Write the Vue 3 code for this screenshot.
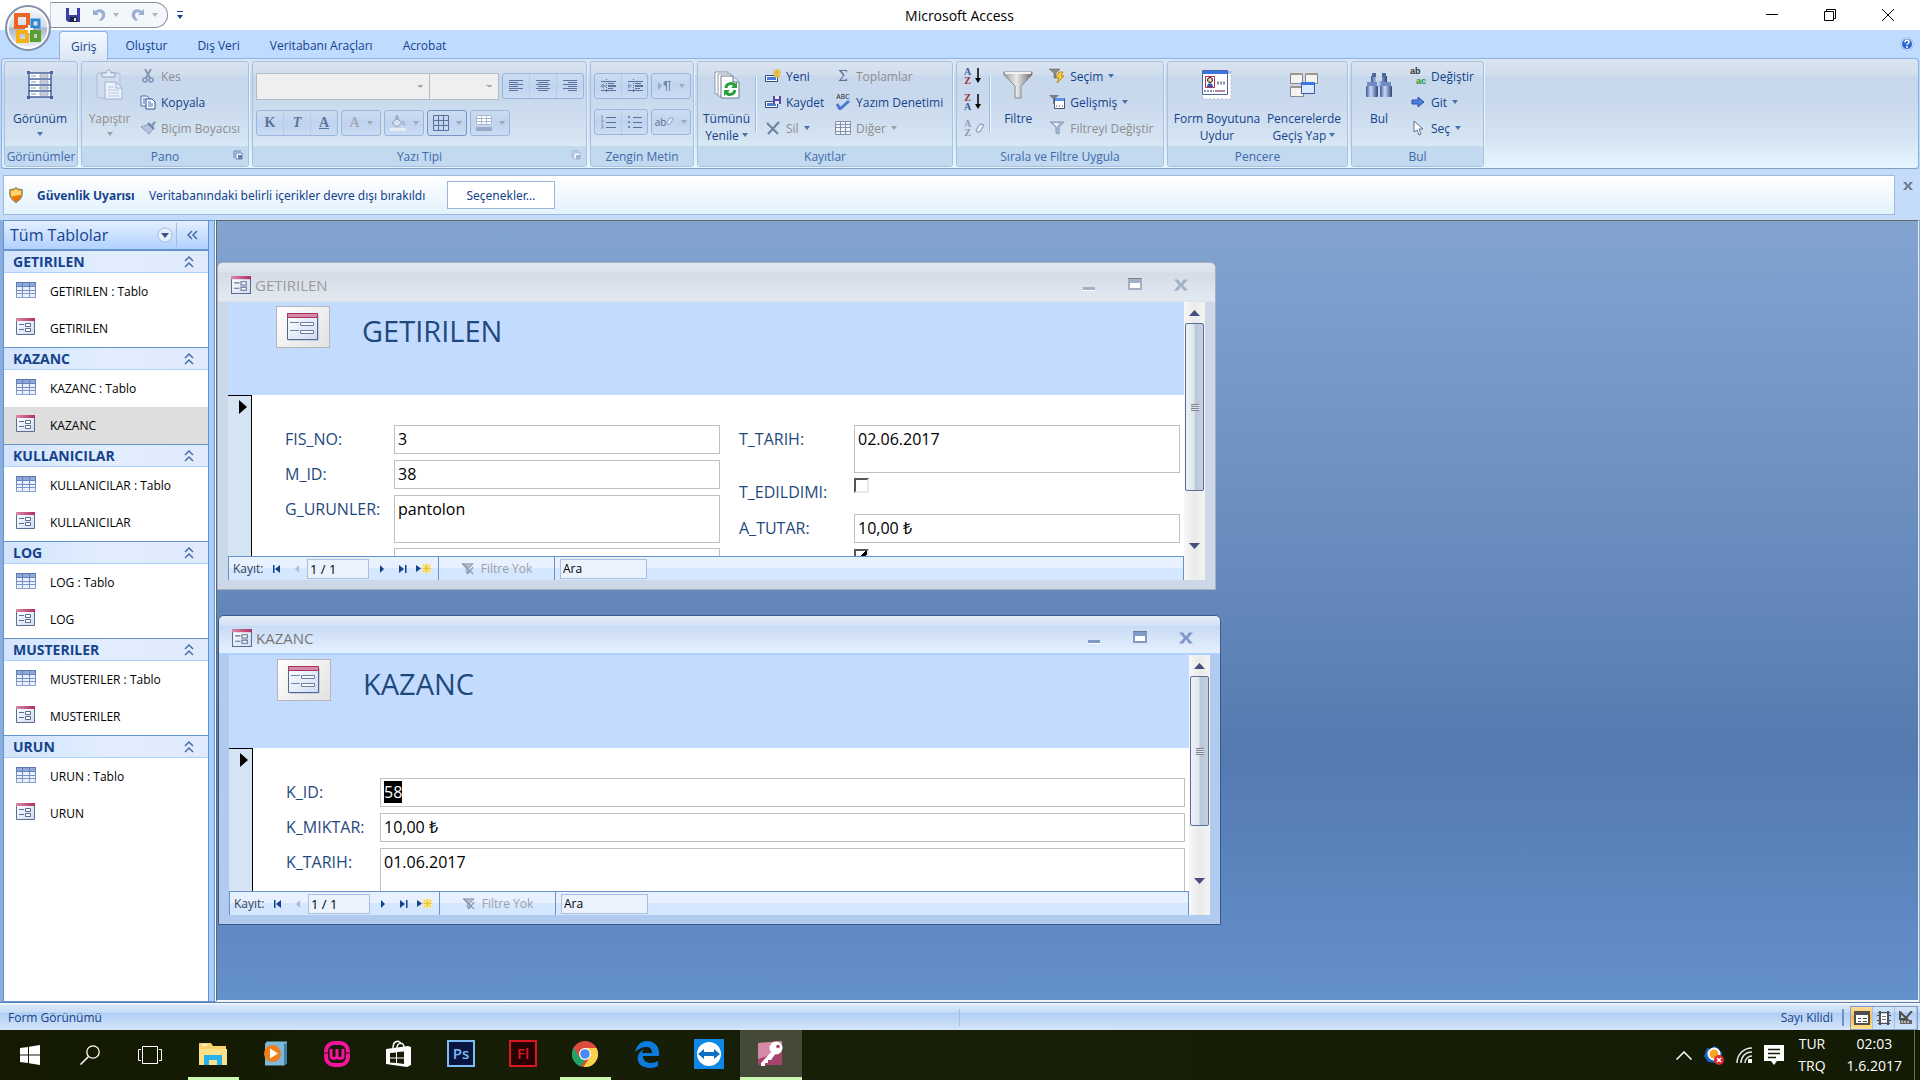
<template>
  <div class="app">
    <!-- ikonlar -->
    <svg class="sprite" aria-hidden="true">
      <defs>
        <linearGradient id="g-orb" x1="0" y1="0" x2="0" y2="1">
          <stop offset="0" stop-color="#fdfdfe" /><stop offset=".48" stop-color="#d3dae6" />
          <stop offset=".5" stop-color="#aab6ca" /><stop offset="1" stop-color="#f4f8fc" />
        </linearGradient>
        <linearGradient id="g-pink" x1="0" y1="0" x2="1" y2="0">
          <stop offset="0" stop-color="#d98bab" /><stop offset="1" stop-color="#b03060" />
        </linearGradient>
        <linearGradient id="g-paper" x1="0" y1="0" x2="1" y2="1">
          <stop offset="0" stop-color="#fff" /><stop offset="1" stop-color="#cfdcf2" />
        </linearGradient>
        <linearGradient id="g-metal" x1="0" y1="0" x2="1" y2="0">
          <stop offset="0" stop-color="#a0a0a0" /><stop offset=".45" stop-color="#e8e8e8" /><stop offset="1" stop-color="#6f6f6f" />
        </linearGradient>
        <linearGradient id="g-binoc" x1="0" y1="0" x2="1" y2="0">
          <stop offset="0" stop-color="#3c5794" /><stop offset=".4" stop-color="#c9dafa" /><stop offset="1" stop-color="#2f4579" />
        </linearGradient>
        <linearGradient id="g-table" x1="0" y1="0" x2="0" y2="1">
          <stop offset="0" stop-color="#5877b4" /><stop offset="1" stop-color="#8ba3cf" />
        </linearGradient>
      </defs>
      <symbol id="i-office" viewBox="0 0 48 48">
        <circle cx="24" cy="24" r="22" fill="url(#g-orb)" stroke="#8391ab" stroke-width="2" />
        <circle cx="24" cy="24" r="20" fill="none" stroke="#fff" stroke-width="1.5" />
        <path d="M12 11h12v12H12z" fill="none" stroke="#ea6424" stroke-width="4" />
        <path d="M28 16h7v7h-7z" fill="none" stroke="#2d8ad2" stroke-width="3" />
        <path d="M14 28h9v9h-9z" fill="none" stroke="#f5b01c" stroke-width="4" />
        <path d="M28 28h7v8h-7z" fill="none" stroke="#58a031" stroke-width="4" />
        <path d="M25 21v8M21 25h8" stroke="#fff" stroke-width="2" />
      </symbol>
      <symbol id="i-save" viewBox="0 0 14 14">
        <path d="M0 0h14v14H2l-2-2z" fill="#3a41a6" /><path d="M3 0h8v7H3z" fill="#eef2fb" />
        <path d="M4 9h7v5H4z" fill="#20223f" /><path d="M8 10h2v3H8z" fill="#dfe5f5" />
      </symbol>
      <symbol id="i-undo" viewBox="0 0 14 14">
        <path d="M1 1v6h6L5 5c3-2 5 0 5 2s-1 3-3 5l2 1c3-2 5-4 4-8C12 1 7 0 3 3z" fill="#9aafd0" />
      </symbol>
      <symbol id="i-arrow" viewBox="0 0 6 4"><path d="M0 0h6L3 4z" fill="currentColor" /></symbol>
      <symbol id="i-view" viewBox="0 0 26 28">
        <g fill="none" stroke="#47639f" stroke-width="1.5">
          <path d="M2 2h22v24H2zM2 8h22M2 14h22M2 20h22" fill="#fff" />
          <path d="M13 4h8v2h-8zM13 10h8v2h-8zM13 16h8v2h-8zM13 22h8v2h-8z" stroke="#8a96ad" stroke-width="1" />
          <path d="M4 5h5M4 11h5M4 17h5M4 23h5" stroke="#8a96ad" stroke-width="1" />
        </g>
        <path d="M0 0h3v3H0zM23 0h3v3h-3zM0 25h3v3H0zM23 25h3v3h-3z" fill="#47639f" />
      </symbol>
      <symbol id="i-paste" viewBox="0 0 27 30">
        <rect x="1" y="3" width="23" height="25" rx="2" fill="#d0dcef" stroke="#aebdd6" />
        <path d="M6 3h4c0-4 5-4 5 0h4v4H6z" fill="#e5ecf6" stroke="#92a3c0" />
        <path d="M9 12h11l6 6v11H9z" fill="#eaf1fb" stroke="#9fb2d1" />
        <path d="M20 12v6h6" fill="none" stroke="#9fb2d1" /><path d="M12 17h6M12 20h11M12 23h11M12 26h11" stroke="#b7c8e2" />
      </symbol>
      <symbol id="i-cut" viewBox="0 0 16 16">
        <path d="M5 1l5 9M11 1L6 10" stroke="#8796b1" stroke-width="2" />
        <circle cx="5" cy="12" r="2" fill="none" stroke="#7f92b5" stroke-width="1.5" /><circle cx="11" cy="12" r="2" fill="none" stroke="#7f92b5" stroke-width="1.5" />
      </symbol>
      <symbol id="i-copy" viewBox="0 0 16 16">
        <path d="M1 2h6l2 2v8H1z" fill="#eef4ff" stroke="#4a6cb0" /><path d="M6 5h6l3 3v7H6z" fill="#fff" stroke="#2d4f99" />
        <path d="M3 5h3M3 7h2M3 9h2M8 8h3M8 10h5M8 12h5" stroke="#4a6cb0" />
      </symbol>
      <symbol id="i-brush" viewBox="0 0 16 16">
        <path d="M11 5l3-4 2 1-3 5z" fill="#8c9cb8" /><path d="M1 7l9-3 4 4-5 6-3-3z" fill="#b4c3de" stroke="#8d9fc0" />
        <path d="M8 3l6 6" stroke="#6f83aa" stroke-width="2" />
      </symbol>
      <symbol id="i-launch" viewBox="0 0 10 10">
        <path d="M1 8V1h7" fill="none" stroke="currentColor" /><path d="M3 3h6v6H3z" fill="#fff" stroke="currentColor" /><path d="M5 5h4v4H5z" fill="currentColor" />
      </symbol>
      <symbol id="i-left" viewBox="0 0 16 14"><path d="M1 1.500h14M1 3.500h9M1 5.500h14M1 7.500h9M1 9.500h14M1 11.500h9" stroke="#5d7299" /></symbol>
      <symbol id="i-center" viewBox="0 0 16 14"><path d="M1 1.500h14M3 3.500h10M1 5.500h14M3 7.500h10M1 9.500h14M3 11.500h10" stroke="#5d7299" /></symbol>
      <symbol id="i-right" viewBox="0 0 16 14"><path d="M1 1.500h14M6 3.500h9M1 5.500h14M6 7.500h9M1 9.500h14M6 11.500h9" stroke="#5d7299" /></symbol>
      <symbol id="i-outdent" viewBox="0 0 16 14">
        <path d="M1 2.500h15M8 4.500h6M8 9.500h5M1 11.500h15" stroke="#5d7299" /><path d="M8 7h8" stroke="#5d7299" stroke-width="2" /><path d="M6.500 0v14" stroke="#5d7299" stroke-dasharray="1 1" />
        <path d="M0 7l4-3v2h2v2H4v2z" fill="#8ea0c0" />
      </symbol>
      <symbol id="i-indent" viewBox="0 0 16 14">
        <path d="M1 2.500h15M8 4.500h6M8 9.500h5M1 11.500h15" stroke="#5d7299" /><path d="M8 7h8" stroke="#5d7299" stroke-width="2" /><path d="M6.500 0v14" stroke="#5d7299" stroke-dasharray="1 1" />
        <path d="M5 7L1 4v6z" fill="#8ea0c0" />
      </symbol>
      <symbol id="i-para" viewBox="0 0 14 12">
        <path d="M0 2l4 4-4 4z" fill="#9aabc8" /><path d="M8.500 11V1M11.500 11V1M13 1.500H7" stroke="#7488ad" /><path d="M8 1a2.500 2.500 0 0 0 0 5z" fill="#7488ad" />
      </symbol>
      <symbol id="i-numbers" viewBox="0 0 16 14">
        <path d="M6 2.500h10M6 7.500h10M6 12.500h10" stroke="#5d7299" /><path d="M2 0v4M1 5h2v2H1M1 10h2v3H1" fill="none" stroke="#8293b2" />
      </symbol>
      <symbol id="i-bullets" viewBox="0 0 16 14">
        <path d="M6 2.500h9M6 7.500h9M6 12.500h9" stroke="#5d7299" /><path d="M1 1h2v2H1zM1 6h2v2H1zM1 11h2v2H1z" fill="#7488ad" />
      </symbol>
      <symbol id="i-eraser" viewBox="0 0 10 12"><path d="M1 8l4-6 4 1-4 7H2z" fill="#e4ebf6" stroke="#8093b5" /></symbol>
      <symbol id="i-bucket" viewBox="0 0 16 16">
        <path d="M2 8l5-5 5 5-5 4z" fill="#d7e0ef" stroke="#8b9cbb" /><path d="M6 5V1h2v4M12 6c3 1 2 3 2 5" fill="none" stroke="#8b9cbb" /><path d="M0 13h16v3H0z" fill="#e6edf7" />
      </symbol>
      <symbol id="i-grid" viewBox="0 0 16 16"><path d="M.5.500h15v15H.5zM.5 5.500h15M.5 10.500h15M5.500.500v15M10.500.500v15" fill="none" stroke="#5a7099" /></symbol>
      <symbol id="i-rows" viewBox="0 0 16 16">
        <path d="M.5.500h15v9H.5zM.5 3.500h15M.5 6.500h15M5.500.500v9M10.500.500v9" fill="#fff" stroke="#a9b8d0" /><path d="M0 12h16v4H0z" fill="#98a9c6" />
      </symbol>
      <symbol id="i-refresh" viewBox="0 0 26 28">
        <path d="M1 1h13v22H1z" fill="#fff" stroke="#8e98a8" /><path d="M4 3h13v22H4z" fill="#fff" stroke="#8e98a8" />
        <path d="M7 5h12l6 6v16H7z" fill="#fff" stroke="#69788f" /><path d="M19 5v6h6" fill="#dfe7f3" stroke="#69788f" />
        <path d="M12 17c0-5 7-6 9-2" fill="none" stroke="#29a03b" stroke-width="3" /><path d="M23 11v6h-6z" fill="#29a03b" />
        <path d="M21 19c-1 5-7 6-9 2" fill="none" stroke="#29a03b" stroke-width="3" /><path d="M10 25v-6h6z" fill="#29a03b" />
      </symbol>
      <symbol id="i-new" viewBox="0 0 16 14">
        <path d="M.5 6.500h12v6H.5z" fill="#fff" stroke="#32497b" /><path d="M2 8h9v3H2z" fill="#4a7bdc" />
        <path d="M12 0v9M8 4h8M9 1l6 7M15 1L9 8" stroke="#e9b82c" stroke-width="1.500" />
      </symbol>
      <symbol id="i-saverec" viewBox="0 0 16 14">
        <path d="M.5 6.500h12v6H.5z" fill="#fff" stroke="#32497b" /><path d="M2 8h9v3H2z" fill="#4a7bdc" />
        <path d="M8 1h8v8H8z" fill="#5548a8" /><path d="M10 1h4v3h-4zM10 6h4v3h-4z" fill="#e8e8f6" />
      </symbol>
      <symbol id="i-delete" viewBox="0 0 14 14"><path d="M1 2l11 11M13 1L2 13" stroke="#6b7f9f" stroke-width="2" /></symbol>
      <symbol id="i-check" viewBox="0 0 14 10"><path d="M1 4l3 5 9-8" fill="none" stroke="#4c78d4" stroke-width="3" /></symbol>
      <symbol id="i-more" viewBox="0 0 16 14">
        <path d="M.5.500h15v13H.5zM.5 3.500h15M.5 6.500h15M.5 10.500h15M5.500.500v13M10.500.500v13" fill="#f0f3f9" stroke="#8493ab" />
      </symbol>
      <symbol id="i-down" viewBox="0 0 6 16"><path d="M3 0v12" stroke="#000" stroke-width="1.500" /><path d="M0 10h6l-3 5z" /></symbol>
      <symbol id="i-funnel" viewBox="0 0 30 28">
        <path d="M1 1h28v3L18 15v12h-6V15L1 4z" fill="url(#g-metal)" stroke="#8a8a8a" /><path d="M2 2h26" stroke="#f2f2f2" stroke-width="2" />
      </symbol>
      <symbol id="i-selfilter" viewBox="0 0 16 16">
        <path d="M0 1h11L7 5v5H5V5z" fill="#8c8c8c" stroke="#555" stroke-width=".5" /><path d="M10 4h4l-2 4h3l-7 7 2-5H7z" fill="#ffcf3f" stroke="#c28716" />
      </symbol>
      <symbol id="i-advfilter" viewBox="0 0 16 16">
        <path d="M0 1h10L6 5v5H4V5z" fill="#7c7c7c" /><path d="M5.500 4.500h10v10h-10z" fill="#fff" stroke="#3d557f" /><path d="M6 4h9v3H6z" fill="#5b93ee" />
        <path d="M7 12h1M10 12h1M13 12h1" stroke="#333" />
      </symbol>
      <symbol id="i-togfilter" viewBox="0 0 16 16"><path d="M1 2h14l-5 5v7l-3-1V7z" fill="#a9b9d3" stroke="#8497b8" /><path d="M4 3h6l-2 4z" fill="#e8eef8" /></symbol>
      <symbol id="i-nofilter" viewBox="0 0 16 14">
        <path d="M1 1h13L9 6v6l-3-1V6z" fill="#b3bccb" stroke="#8c97ab" /><path d="M2 1l12 12M14 5l-7 8" stroke="#8c97ab" stroke-width="1.500" />
      </symbol>
      <symbol id="i-fitform" viewBox="0 0 30 30">
        <path d="M1 1h28v28H1z" fill="#fff" stroke="#b3bccb" stroke-dasharray="2 2" /><path d="M26 1h3v3h-3z" fill="#a9c4f0" /><path d="M.5.500h25v24H.5z" fill="#fff" stroke="#4a66a0" />
        <path d="M1 1h24v3H1z" fill="#3b76e6" /><path d="M3.500 6.500h9v11h-9z" fill="#fff" stroke="#b0305c" />
        <circle cx="8" cy="10" r="2.500" fill="#f1cda6" stroke="#222" /><path d="M5 17c0-5 6-5 6 0z" fill="#3555a8" />
        <path d="M15 13h8" stroke="#8592ab" stroke-width="3" stroke-dasharray="2 1" /><path d="M2 21h10" stroke="#8592ab" stroke-width="2" stroke-dasharray="2 1" /><path d="M13 21h10" stroke="#b58aa0" stroke-width="2" />
      </symbol>
      <symbol id="i-switch" viewBox="0 0 30 28">
        <g fill="#f4f3f1" stroke="#8b8782"><path d="M1.500 2.500h12v10h-12zM16.500 2.500h12v10h-12zM1.500 15.500h13v10h-13z" /></g>
        <path d="M2 2h12v2H2zM16 2h12v2H16zM2 15h12v2H2z" fill="#9b9791" /><path d="M12.500 11.500h13v11h-13z" fill="#dbe8fb" stroke="#3d5c9b" /><path d="M12 11h14v3H12z" fill="#3b76e6" />
      </symbol>
      <symbol id="i-find" viewBox="0 0 28 26">
        <path d="M6 4h5v9H6zM17 4h5v9h-5zM11 9h6v6h-6z" fill="url(#g-binoc)" /><path d="M7 1h4v4H7zM17 1h4v4h-4z" fill="#51699f" />
        <path d="M2 10h10v5H2zM16 10h10v5H16z" fill="#6f8cc6" /><rect x="1" y="14" width="12" height="11" rx="1" fill="url(#g-binoc)" /><rect x="15" y="14" width="12" height="11" rx="1" fill="url(#g-binoc)" />
      </symbol>
      <symbol id="i-goto" viewBox="0 0 14 12"><path d="M1 4h6V1l6 5-6 5V8H1z" fill="#4c80e0" stroke="#2b50a8" /></symbol>
      <symbol id="i-cursor" viewBox="0 0 12 16"><path d="M2 1v11l3-2 2 5 2-1-2-5h4z" fill="#fff" stroke="#5f6d87" /></symbol>
      <symbol id="i-help" viewBox="0 0 14 14"><circle cx="7" cy="7" r="6" fill="#2d63d8" stroke="#7d9bd6" /><circle cx="7" cy="7" r="5.500" fill="none" stroke="#e4edfb" /><path d="M5 5.500c0-3 4-3 4-.5 0 1.500-2 1.500-2 3M7 9v2" fill="none" stroke="#fff" stroke-width="1.500" /></symbol>
      <symbol id="i-shield" viewBox="0 0 14 16">
        <path d="M7 .5c2 2 4 2 6 2 1 7-1 10-6 13-5-3-7-6-6-13 2 0 4 0 6-2z" fill="#f39a13" stroke="#6d7480" /><path d="M7 2c1 1 3 2 5 2v4L2 9V4c2 0 4-1 5-2z" fill="#ffd667" /><path d="M3 10l9-2c-1 4-2 5-5 7z" fill="#e8740a" />
      </symbol>
      <symbol id="i-x" viewBox="0 0 10 8"><path d="M0 0h3l2 3 2-3h3L6.500 4 10 8H7L5 5 3 8H0l3.500-4z" fill="currentColor" /></symbol>
      <symbol id="i-table" viewBox="0 0 20 16">
        <path d="M0 0h20v16H0z" fill="url(#g-table)" /><path d="M1 1h5v3H1zM7 1h6v3H7zM14 1h5v3h-5z" fill="#8fa8d6" />
        <path d="M1 5h5v3H1zM7 5h6v3H7zM14 5h5v3h-5zM1 9h5v2H1zM7 9h6v2H7zM14 9h5v2h-5zM1 12h5v3H1zM7 12h6v3H7zM14 12h5v3h-5z" fill="#eaf1fd" />
      </symbol>
      <symbol id="i-form" viewBox="0 0 19 17">
        <path d="M.5.500h18v16H.5z" fill="url(#g-paper)" stroke="#5b6d90" /><path d="M0 0h19v3H0z" fill="url(#g-pink)" />
        <path d="M3 6.500h5M3 11.500h5" stroke="#5b6d90" /><path d="M9.500 5.500h5v3h-5zM9.500 10.500h5v3h-5z" fill="#fff" stroke="#5b6d90" />
      </symbol>
      <symbol id="i-bigform" viewBox="0 0 32 28">
        <path d="M2 2h30v26H2z" fill="#c9ced8" /><path d="M.5.500h30v26H.5z" fill="url(#g-paper)" stroke="#4d6894" /><path d="M.5.500h30v4H.5z" fill="#d68aab" stroke="#a83560" />
        <path d="M3 9.500h9M3 17.500h9" stroke="#6d86ad" /><path d="M13.500 9.500h13v3h-13zM13.500 17.500h13v3h-13z" fill="#f4f8ff" stroke="#6d7f9f" />
      </symbol>
      <symbol id="i-dropcircle" viewBox="0 0 16 16"><circle cx="8" cy="8" r="7" fill="#e6effc" stroke="#a9bfdf" /><path d="M4 6h8l-4 5z" fill="#3a518a" /></symbol>
      <symbol id="i-collapse" viewBox="0 0 12 10"><path d="M5 1L1 5l4 4M10 1L6 5l4 4" fill="none" stroke="#4468a8" stroke-width="1.500" /></symbol>
      <symbol id="i-chevrons" viewBox="0 0 10 12"><path d="M1 5l4-4 4 4M1 11l4-4 4 4" fill="none" stroke="#4a6ca8" stroke-width="1.500" /></symbol>
      <symbol id="i-min" viewBox="0 0 14 13"><path d="M1 9h12v3H1z" fill="currentColor" /><path d="M1 12h12v1H1z" fill="#fff" /></symbol>
      <symbol id="i-max" viewBox="0 0 14 13"><path d="M0 0h14v12H0z" fill="currentColor" /><path d="M0 0h14v1H0z" fill="#666" opacity=".6" /><path d="M2 5h10v5H2z" fill="#fff" /></symbol>
      <symbol id="i-first" viewBox="0 0 8 8"><path d="M0 0h1.500v8H0zM7 0v8L2 4z" fill="currentColor" /></symbol>
      <symbol id="i-prev" viewBox="0 0 8 8"><path d="M6 0v8L2 4z" fill="currentColor" /></symbol>
      <symbol id="i-next" viewBox="0 0 8 8"><path d="M2 0v8l4-4z" fill="currentColor" /></symbol>
      <symbol id="i-last" viewBox="0 0 8 8"><path d="M6 0h1.500v8H6zM0 0v8l5-4z" fill="currentColor" /></symbol>
      <symbol id="i-newrec" viewBox="0 0 15 9"><path d="M0 1v7l5-3.500z" fill="currentColor" /><path d="M6 0h9v9H6z" fill="#fbe9a0" /><path d="M10.500 0v9M6 4.500h9M7 1l7 7M14 1L7 8" stroke="#e9c53f" /></symbol>
      <symbol id="i-formview" viewBox="0 0 16 14"><path d="M1 1h14v12H1z" fill="#fff" stroke="#4f4f4f" stroke-width="2" /><path d="M1 3h14" stroke="#4f4f4f" stroke-width="2" /><path d="M4 7.500h3M4 10.500h3M9 7.500h4M9 10.500h4" stroke="#4f4f4f" /></symbol>
      <symbol id="i-layoutview" viewBox="0 0 14 14"><path d="M1 1.500h12M1 12.500h12" stroke="#4f4f4f" /><path d="M3 0v14M11 0v14" stroke="#4f4f4f" stroke-width="2" /><path d="M4 3h6v8H4z" fill="#fff" /><path d="M0 4.500h14M0 9.500h14" stroke="#4f4f4f" stroke-dasharray="2 10" /><path d="M5 5.500h4M5 8.500h4" stroke="#777" /></symbol>
      <symbol id="i-design" viewBox="0 0 14 14"><path d="M1 1v7h7zM13 0L6 8" fill="none" stroke="#4f4f4f" stroke-width="2" /><path d="M1 9h12v4H1z" fill="#666" /><path d="M3 10v2M6 10v2M9 10v2" stroke="#fff" /></symbol>

      <symbol id="t-start" viewBox="0 0 20 20"><path d="M0 3l8-1v7.500H0zM9 1.800L20 0v9.500H9zM0 10.500h8V18l-8-1zM9 10.500h11V20L9 18.200z" fill="#fff" /></symbol>
      <symbol id="t-search" viewBox="0 0 20 20"><circle cx="13" cy="7" r="6.200" fill="none" stroke="#fff" stroke-width="1.300" /><path d="M8.500 11.500L.5 19.500" stroke="#fff" stroke-width="1.500" /></symbol>
      <symbol id="t-task" viewBox="0 0 24 18"><path d="M4.500.500h15v17h-15zM3 3.500H.5v11H3M21 3.500h2.500v11H21" fill="none" stroke="#fff" /></symbol>
      <symbol id="t-explorer" viewBox="0 0 28 24">
        <path d="M0 1h12l2 3h13v19H0z" fill="#f6d36a" /><path d="M0 7h28v16H0z" fill="#fde08a" /><path d="M3 2h5v2H3z" fill="#f8f0d0" />
        <path d="M5 13h18v10h-5v-5h-8v5H5z" fill="#29b0ea" />
      </symbol>
      <symbol id="t-wmp" viewBox="0 0 24 24"><path d="M4 0h20v22l-3 2H2V2z" fill="#7eb8d8" /><path d="M21 2h3v20l-3 2z" fill="#3c7fa6" /><circle cx="9.500" cy="12" r="8.500" fill="#ef7d1a" /><path d="M7 7l8 5-8 5z" fill="#fff" /></symbol>
      <symbol id="t-wamp" viewBox="0 0 26 26">
        <rect x="2" y="2" width="22" height="22" rx="8" fill="none" stroke="#f5149a" stroke-width="4" /><path d="M7 8v7c0 3 4 3 6 1 2 2 6 2 6-1V8M13 8v8" fill="none" stroke="#f5149a" stroke-width="3" />
        <path d="M0 12h5M21 12h5" stroke="#161c06" />
      </symbol>
      <symbol id="t-store" viewBox="0 0 26 28">
        <path d="M7 8c0-8 7-8 8-4M11 8c0-6 7-6 7-1" fill="none" stroke="#fff" stroke-width="1.500" /><path d="M0 9l22-3 3 1v18l-4 2-21-3z" fill="#fff" />
        <path d="M4 13l6-.5v5H4zM11 12l7-.5v6h-7zM4 18.500h6v4.500l-6-.5zM11 18.500h7V24l-7-1z" fill="#161c06" />
      </symbol>
      <symbol id="t-chrome" viewBox="0 0 28 28">
        <circle cx="14" cy="14" r="13" fill="#dd4b3e" /><path d="M2.700 7.500L8 17l6 3-4 6.500A13 13 0 0 1 2.700 7.500z" fill="#1fa463" /><path d="M14 8h11.500A13 13 0 0 1 12.500 27L19 17z" fill="#fcd14c" />
        <circle cx="14" cy="14" r="6" fill="#fff" /><circle cx="14" cy="14" r="4.800" fill="#4a8af4" />
      </symbol>
      <symbol id="t-edge" viewBox="0 0 26 28"><path d="M1 12C3 4 8 1 13 1c8 0 12 6 12 12v3H9c0 5 4 7 8 7 3 0 5-1 7-2v5c-2 1-5 2-8 2-8 0-14-5-12-12 1-4 4-6 6-7-1 1-2 3-2 4h10c0-5-3-6-6-6-4 0-8 2-11 5z" fill="#0b7cdc" /></symbol>
      <symbol id="t-tv" viewBox="0 0 30 30"><path d="M0 0h30v30H0z" fill="#0d86e4" /><circle cx="15" cy="15" r="12" fill="#fff" /><path d="M4 15l6-5v3h10v-3l6 5-6 5v-3H10v3z" fill="#0e6fc6" /></symbol>
      <symbol id="t-access" viewBox="0 0 26 26">
        <path d="M0 2l24-2v24H0z" fill="#a8436e" /><path d="M0 2l24-2v10L0 18z" fill="#d58aa9" /><circle cx="18" cy="7" r="6.500" fill="#fff" /><circle cx="20" cy="5.500" r="1.800" fill="#a8436e" />
        <path d="M15 9L3 22v3h4v-3h3v-3h3l5-7z" fill="#fff" />
      </symbol>
      <symbol id="t-up" viewBox="0 0 16 9"><path d="M.5 8.500L8 1l7.500 7.500" fill="none" stroke="#fff" stroke-width="1.500" /></symbol>
      <symbol id="t-sync" viewBox="0 0 20 20">
        <path d="M3 3l4 1 3-3 4 2 4 5-1 6-5 4-8-1-4-6z" fill="#1565c0" /><circle cx="10" cy="9" r="6.500" fill="#fff" /><circle cx="10" cy="9" r="4.500" fill="#f7a42a" />
        <circle cx="15" cy="15" r="5" fill="#d92b2b" /><path d="M13 13l4 4M17 13l-4 4" stroke="#fff" stroke-width="1.500" />
      </symbol>
      <symbol id="t-wifi" viewBox="0 0 16 16">
        <path d="M1 16C1 8 7 1 16 1M5 16c0-6 4-11 11-11M9 16c0-4 3-7 7-7" fill="none" stroke="#e8e8e8" stroke-width="1.500" /><path d="M12 12h4v4h-4z" fill="#fff" />
      </symbol>
      <symbol id="t-msg" viewBox="0 0 20 20"><path d="M0 0h20v16h-7l-3 4-3-4H0z" fill="#fff" /><path d="M4 4.500h12M4 8.500h12M4 12.500h8" stroke="#161c06" stroke-width="1.500" /></symbol>
    </svg>

    <header class="titlebar">
      <button class="orb" aria-label="Office Düğmesi"><svg width="48" height="48"><use href="#i-office" /></svg></button>
      <div class="quick">
        <button aria-label="Kaydet"><svg width="14" height="14"><use href="#i-save" /></svg></button>
        <button class="dim" aria-label="Geri Al"><svg width="14" height="14"><use href="#i-undo" /></svg><svg width="6" height="4"><use href="#i-arrow" /></svg></button>
        <button class="dim" aria-label="Yinele"><svg class="flip" width="14" height="14"><use href="#i-undo" /></svg><svg width="6" height="4"><use href="#i-arrow" /></svg></button>
      </div>
      <button class="customize" aria-label="Özelleştir"><svg width="6" height="4"><use href="#i-arrow" /></svg></button>
      <h1>Microsoft Access</h1>
      <div class="win-buttons">
        <button aria-label="Simge durumuna küçült"><svg width="12" height="12"><path d="M0 5.500h12" stroke="#000" /></svg></button>
        <button aria-label="Geri yükle"><svg width="12" height="12"><path d="M.5 2.500h9v9h-9zM2.500 2.500v-2h9v9h-2" fill="none" stroke="#000" /></svg></button>
        <button aria-label="Kapat"><svg width="12" height="12"><path d="M0 0l12 12M12 0L0 12" stroke="#000" /></svg></button>
      </div>
    </header>

    <nav class="tabs">
      <button v-for="(tab, i) in tabs" :key="tab" :class="{ active: i === 0 }">{{ tab }}</button>
      <button class="help" aria-label="Yardım"><svg width="14" height="14"><use href="#i-help" /></svg></button>
    </nav>

    <div class="ribbon">
      <section class="group g-views">
        <div class="group-body">
          <button class="big"><svg width="26" height="32"><use href="#i-view" /></svg><span>Görünüm</span><svg class="arrow" width="6" height="4"><use href="#i-arrow" /></svg></button>
        </div>
        <footer>Görünümler</footer>
      </section>

      <section class="group g-clip">
        <div class="group-body">
          <button class="big off" disabled><svg width="27" height="32"><use href="#i-paste" /></svg><span>Yapıştır</span><svg class="arrow" width="6" height="4"><use href="#i-arrow" /></svg></button>
          <div class="smalls">
            <button class="off" disabled><svg width="16" height="16"><use href="#i-cut" /></svg>Kes</button>
            <button><svg width="16" height="16"><use href="#i-copy" /></svg>Kopyala</button>
            <button class="off" disabled><svg width="16" height="16"><use href="#i-brush" /></svg>Biçim Boyacısı</button>
          </div>
        </div>
        <footer>Pano<svg class="launch" width="10" height="10"><use href="#i-launch" /></svg></footer>
      </section>

      <section class="group g-font">
        <div class="group-body tools">
          <div class="tool-row">
            <div class="combos">
              <select class="font-name" aria-label="Yazı tipi" disabled></select>
              <select class="font-size" aria-label="Boyut" disabled></select>
            </div>
            <div class="btn-set">
              <button aria-label="Sola hizala"><svg width="16" height="14"><use href="#i-left" /></svg></button>
              <button aria-label="Ortala"><svg width="16" height="14"><use href="#i-center" /></svg></button>
              <button aria-label="Sağa hizala"><svg width="16" height="14"><use href="#i-right" /></svg></button>
            </div>
          </div>
          <div class="tool-row">
            <div class="btn-set letters"><button><b>K</b></button><button><i>T</i></button><button><u>A</u></button></div>
            <div class="btn-set letters drop"><button>A<svg width="6" height="4"><use href="#i-arrow" /></svg></button></div>
            <div class="btn-set drop"><button aria-label="Dolgu"><svg width="16" height="16"><use href="#i-bucket" /></svg><svg width="6" height="4"><use href="#i-arrow" /></svg></button></div>
            <div class="btn-set drop dark"><button aria-label="Kılavuz çizgileri"><svg width="16" height="16"><use href="#i-grid" /></svg><svg width="6" height="4"><use href="#i-arrow" /></svg></button></div>
            <div class="btn-set drop"><button aria-label="Satır rengi"><svg width="16" height="16"><use href="#i-rows" /></svg><svg width="6" height="4"><use href="#i-arrow" /></svg></button></div>
          </div>
        </div>
        <footer>Yazı Tipi<svg class="launch faded" width="10" height="10"><use href="#i-launch" /></svg></footer>
      </section>

      <section class="group g-rich">
        <div class="group-body tools">
          <div class="tool-row">
            <div class="btn-set"><button aria-label="Girintiyi azalt"><svg width="16" height="14"><use href="#i-outdent" /></svg></button><button aria-label="Girintiyi artır"><svg width="16" height="14"><use href="#i-indent" /></svg></button></div>
            <div class="btn-set drop"><button aria-label="Yön"><svg width="14" height="12"><use href="#i-para" /></svg><svg width="6" height="4"><use href="#i-arrow" /></svg></button></div>
          </div>
          <div class="tool-row">
            <div class="btn-set"><button aria-label="Numaralar"><svg width="16" height="14"><use href="#i-numbers" /></svg></button><button aria-label="Madde işaretleri"><svg width="16" height="14"><use href="#i-bullets" /></svg></button></div>
            <div class="btn-set drop"><button><span class="ab">ab<svg width="8" height="10"><use href="#i-eraser" /></svg></span><svg width="6" height="4"><use href="#i-arrow" /></svg></button></div>
          </div>
        </div>
        <footer>Zengin Metin</footer>
      </section>

      <section class="group g-records">
        <div class="group-body">
          <button class="big"><svg width="26" height="32"><use href="#i-refresh" /></svg><span>Tümünü<br>Yenile <svg width="6" height="4"><use href="#i-arrow" /></svg></span></button>
          <i class="sep"></i>
          <div class="smalls">
            <button><svg width="16" height="14"><use href="#i-new" /></svg>Yeni</button>
            <button><svg width="16" height="14"><use href="#i-saverec" /></svg>Kaydet</button>
            <button class="off live"><svg width="16" height="14"><use href="#i-delete" /></svg>Sil<svg width="6" height="4"><use href="#i-arrow" /></svg></button>
          </div>
          <div class="smalls">
            <button class="off" disabled><span class="glyph">Σ</span>Toplamlar</button>
            <button><span class="abc">ABC<svg width="14" height="10"><use href="#i-check" /></svg></span>Yazım Denetimi</button>
            <button class="off" disabled><svg width="16" height="14"><use href="#i-more" /></svg>Diğer<svg width="6" height="4"><use href="#i-arrow" /></svg></button>
          </div>
        </div>
        <footer>Kayıtlar</footer>
      </section>

      <section class="group g-sort">
        <div class="group-body">
          <div class="smalls sorts">
            <button><span class="az"><b>A</b><b class="z">Z</b></span><svg width="6" height="16"><use href="#i-down" /></svg></button>
            <button><span class="az"><b class="z">Z</b><b>A</b></span><svg width="6" height="16"><use href="#i-down" /></svg></button>
            <button class="off" disabled><span class="az"><b>A</b><b>Z</b></span><svg width="10" height="12"><use href="#i-eraser" /></svg></button>
          </div>
          <i class="sep"></i>
          <button class="big"><svg width="30" height="32"><use href="#i-funnel" /></svg><span>Filtre</span></button>
          <div class="smalls">
            <button><svg width="16" height="16"><use href="#i-selfilter" /></svg>Seçim<svg width="6" height="4"><use href="#i-arrow" /></svg></button>
            <button><svg width="16" height="16"><use href="#i-advfilter" /></svg>Gelişmiş<svg width="6" height="4"><use href="#i-arrow" /></svg></button>
            <button class="off" disabled><svg width="16" height="16"><use href="#i-togfilter" /></svg>Filtreyi Değiştir</button>
          </div>
        </div>
        <footer>Sırala ve Filtre Uygula</footer>
      </section>

      <section class="group g-window">
        <div class="group-body">
          <button class="big"><svg width="30" height="32"><use href="#i-fitform" /></svg><span>Form Boyutuna<br>Uydur</span></button>
          <button class="big"><svg width="30" height="32"><use href="#i-switch" /></svg><span>Pencerelerde<br>Geçiş Yap <svg width="6" height="4"><use href="#i-arrow" /></svg></span></button>
        </div>
        <footer>Pencere</footer>
      </section>

      <section class="group g-find">
        <div class="group-body">
          <button class="big"><svg width="28" height="32"><use href="#i-find" /></svg><span>Bul</span></button>
          <div class="smalls">
            <button><span class="replace"><b>ab</b><em>ac</em></span>Değiştir</button>
            <button><svg width="16" height="12"><use href="#i-goto" /></svg>Git<svg width="6" height="4"><use href="#i-arrow" /></svg></button>
            <button><svg width="16" height="16"><use href="#i-cursor" /></svg>Seç<svg width="6" height="4"><use href="#i-arrow" /></svg></button>
          </div>
        </div>
        <footer>Bul</footer>
      </section>
    </div>

    <div class="message-area">
      <div class="message-bar">
        <svg width="14" height="16"><use href="#i-shield" /></svg>
        <strong>Güvenlik Uyarısı</strong>
        <span>Veritabanındaki belirli içerikler devre dışı bırakıldı</span>
        <button>Seçenekler...</button>
      </div>
      <button class="message-close" aria-label="İleti çubuğunu kapat"><svg width="10" height="8"><use href="#i-x" /></svg></button>
    </div>

    <main class="workspace">
      <aside class="nav-pane">
        <div class="nav-head">
          <h2>Tüm Tablolar</h2>
          <button aria-label="Menü"><svg width="16" height="16"><use href="#i-dropcircle" /></svg></button>
          <button class="nav-collapse" aria-label="Daralt"><svg width="12" height="10"><use href="#i-collapse" /></svg></button>
        </div>
        <section v-for="name in tables" :key="name" class="nav-group">
          <h3>{{ name }}<svg width="10" height="12"><use href="#i-chevrons" /></svg></h3>
          <a href="#"><svg width="20" height="16"><use href="#i-table" /></svg>{{ name }} : Tablo</a>
          <a href="#" :class="{ selected: name === selected }"><svg width="19" height="17"><use href="#i-form" /></svg>{{ name }}</a>
        </section>
      </aside>

      <div class="desktop">
        <article v-for="win in windows" :key="win.name" class="window" :class="[win.cls, { active: win.name === selected }]">
          <header class="win-title">
            <svg width="20" height="18"><use href="#i-form" /></svg>
            <h2>{{ win.name }}</h2>
            <button aria-label="Küçült"><svg width="14" height="13"><use href="#i-min" /></svg></button>
            <button aria-label="Ekranı kapla"><svg width="14" height="13"><use href="#i-max" /></svg></button>
            <button aria-label="Kapat"><svg width="14" height="12"><use href="#i-x" /></svg></button>
          </header>
          <div class="win-client">
            <div class="win-form">
              <div class="form-head">
                <div class="form-logo"><svg width="32" height="28"><use href="#i-bigform" /></svg></div>
                <h1>{{ win.name }}</h1>
              </div>
              <div class="form-detail">
                <div class="selector"><svg width="8" height="14"><path d="M0 0l8 7-8 7z" /></svg></div>
                <div class="form-body">
                  <div v-for="(col, c) in win.columns" :key="c" class="form-col">
                    <div v-for="field in col" :key="field.id" class="field" :class="field.kind">
                      <label :for="field.id">{{ field.label }}</label>
                      <input v-if="field.kind === 'check'" :id="field.id" v-model="field.value" type="checkbox">
                      <textarea v-else-if="field.kind === 'tall'" :id="field.id" v-model="field.value"></textarea>
                      <input v-else :id="field.id" v-model="field.value" type="text">
                    </div>
                  </div>
                </div>
              </div>
              <div class="record-nav">
                <span class="rec-label">Kayıt:</span>
                <button aria-label="İlk kayıt"><svg width="8" height="8"><use href="#i-first" /></svg></button>
                <button class="pale" aria-label="Önceki kayıt"><svg width="8" height="8"><use href="#i-prev" /></svg></button>
                <input class="rec-pos" type="text" value="1 / 1" aria-label="Geçerli kayıt">
                <button aria-label="Sonraki kayıt"><svg width="8" height="8"><use href="#i-next" /></svg></button>
                <button aria-label="Son kayıt"><svg width="8" height="8"><use href="#i-last" /></svg></button>
                <button aria-label="Yeni kayıt"><svg width="15" height="9"><use href="#i-newrec" /></svg></button>
                <button class="no-filter" disabled><svg width="14" height="12"><use href="#i-nofilter" /></svg>Filtre Yok</button>
                <input class="rec-search" type="text" value="Ara" aria-label="Ara">
              </div>
            </div>
            <div class="scroll">
              <svg width="11" height="6"><path d="M0 6h11L5.500 0z" fill="#434f7c" /></svg>
              <div class="thumb"><i></i></div>
              <svg class="scroll-down" width="11" height="6"><path d="M0 0h11L5.500 6z" fill="#434f7c" /></svg>
            </div>
          </div>
        </article>
      </div>
    </main>

    <div class="status">
      <span class="status-left">Form Görünümü</span>
      <span class="status-right">Sayı Kilidi</span>
      <div class="views">
        <button class="on" aria-label="Form Görünümü"><svg width="16" height="14"><use href="#i-formview" /></svg></button>
        <button aria-label="Düzen Görünümü"><svg width="14" height="14"><use href="#i-layoutview" /></svg></button>
        <button aria-label="Tasarım Görünümü"><svg width="14" height="14"><use href="#i-design" /></svg></button>
      </div>
    </div>

    <footer class="taskbar">
      <button v-for="item in system" :key="item.icon" class="sys" :aria-label="item.name"><svg :width="item.w" :height="item.h"><use :href="'#' + item.icon" /></svg></button>
      <button v-for="app in apps" :key="app.name" class="task" :class="app.state" :aria-label="app.name">
        <span v-if="app.text" class="adobe" :class="app.cls">{{ app.text }}</span>
        <svg v-else :width="app.w" :height="app.h"><use :href="'#' + app.icon" /></svg>
      </button>
      <div class="tray">
        <svg width="16" height="9"><use href="#t-up" /></svg>
        <svg width="20" height="20"><use href="#t-sync" /></svg>
        <svg width="16" height="16"><use href="#t-wifi" /></svg>
        <svg width="20" height="20"><use href="#t-msg" /></svg>
        <div class="lang">TUR<br>TRQ</div>
        <time>02:03<br>1.6.2017</time>
      </div>
    </footer>
  </div>
</template>

<script setup>
import { onMounted, reactive } from 'vue'

const tabs = ['Giriş', 'Oluştur', 'Dış Veri', 'Veritabanı Araçları', 'Acrobat']
const tables = ['GETIRILEN', 'KAZANC', 'KULLANICILAR', 'LOG', 'MUSTERILER', 'URUN']
const selected = 'KAZANC'

const windows = reactive([
  {
    name: 'GETIRILEN',
    cls: 'w-getirilen',
    columns: [
      [
        { id: 'fis-no', label: 'FIS_NO:', value: '3' },
        { id: 'm-id', label: 'M_ID:', value: '38' },
        { id: 'g-urunler', label: 'G_URUNLER:', value: 'pantolon', kind: 'tall' },
        { id: 'g-next', label: '', value: '' }
      ],
      [
        { id: 't-tarih', label: 'T_TARIH:', value: '02.06.2017', kind: 'tall' },
        { id: 't-edildimi', label: 'T_EDILDIMI:', value: false, kind: 'check' },
        { id: 'a-tutar', label: 'A_TUTAR:', value: '10,00 ₺' },
        { id: 'a-next', label: '', value: true, kind: 'check' }
      ]
    ]
  },
  {
    name: 'KAZANC',
    cls: 'w-kazanc',
    columns: [
      [
        { id: 'k-id', label: 'K_ID:', value: '58' },
        { id: 'k-miktar', label: 'K_MIKTAR:', value: '10,00 ₺' },
        { id: 'k-tarih', label: 'K_TARIH:', value: '01.06.2017', kind: 'tall' }
      ]
    ]
  }
])

const system = [
  { name: 'Başlat', icon: 't-start', w: 20, h: 20 },
  { name: 'Ara', icon: 't-search', w: 20, h: 20 },
  { name: 'Görev Görünümü', icon: 't-task', w: 24, h: 18 }
]

const apps = [
  { name: 'Dosya Gezgini', icon: 't-explorer', w: 28, h: 24, state: 'open' },
  { name: 'Media Player', icon: 't-wmp', w: 24, h: 25 },
  { name: 'WampServer', icon: 't-wamp', w: 26, h: 26 },
  { name: 'Mağaza', icon: 't-store', w: 26, h: 30 },
  { name: 'Photoshop', text: 'Ps', cls: 'ps' },
  { name: 'Flash', text: 'Fl', cls: 'fl' },
  { name: 'Chrome', icon: 't-chrome', w: 28, h: 28, state: 'open' },
  { name: 'Edge', icon: 't-edge', w: 26, h: 28 },
  { name: 'TeamViewer', icon: 't-tv', w: 30, h: 30 },
  { name: 'Access', icon: 't-access', w: 26, h: 26, state: 'current' }
]

// aktif formun ilk alanı seçili gelir
onMounted(() => {
  const first = document.getElementById('k-id')
  first.focus({ preventScroll: true })
  first.select()
})
</script>

<style>
body {
  margin: 0;
}
</style>

<style scoped>
.app {
  display: flex;
  flex-direction: column;
  height: 100vh;
  overflow: hidden;
  position: relative;
  background: #bfdbff;
  color: #15428b;
  font: 12px/17px "Open Sans", "Noto Sans", sans-serif;
}

.app * {
  box-sizing: border-box;
}

.sprite {
  position: absolute;
  width: 0;
  height: 0;
}

svg {
  flex: none;
}

h1, h2, h3 {
  margin: 0;
  font-weight: 400;
}

button {
  display: flex;
  align-items: center;
  justify-content: center;
  padding: 0;
  border: 0;
  background: none;
  color: inherit;
  font: inherit;
  white-space: nowrap;
}

input, textarea {
  font: inherit;
  color: #000;
  border-radius: 0;
  outline: 0;
}

/* başlık çubuğu */
.titlebar {
  display: flex;
  align-items: center;
  flex: none;
  height: 30px;
  padding-left: 50px;
  background: #fff;
}

.orb {
  position: absolute;
  left: 4px;
  top: 4px;
  z-index: 2;
}

.quick {
  display: flex;
  align-items: center;
  gap: 12px;
  width: 118px;
  height: 26px;
  padding-left: 15px;
  border: 1px solid #8b8f98;
  border-radius: 0 13px 13px 0;
  border-left-color: #c8ccd4;
  background: #f3f6fb;
}

.quick button {
  gap: 7px;
}

.quick .dim {
  color: #b3b3b3;
}

.flip {
  transform: scaleX(-1);
}

.customize {
  flex-direction: column;
  width: 24px;
  color: #15428b;
}

.customize::before {
  content: "";
  width: 6px;
  height: 1px;
  margin-bottom: 3px;
  background: #15428b;
}

.titlebar h1 {
  flex: 1;
  padding-right: 16px;
  color: #000;
  font-size: 14px;
  text-align: center;
}

.win-buttons {
  display: flex;
  padding-right: 3px;
}

.win-buttons button {
  width: 58px;
  height: 28px;
}

/* sekmeler */
.tabs {
  display: flex;
  flex: none;
  height: 28px;
  padding-left: 59px;
}

.tabs button {
  padding: 3px 15px 0;
}

.tabs .active {
  position: relative;
  z-index: 1;
  height: 29px;
  margin: 1px 2px 0 0;
  padding: 1px 11px 0;
  border: 1px solid #8db2e3;
  border-bottom: 0;
  border-radius: 4px 4px 0 0;
  background: linear-gradient(#f4f9ff, #dbe6f4);
}

.tabs .help {
  margin-left: auto;
  padding: 0 6px 0 0;
}

/* şerit */
.ribbon {
  display: flex;
  flex: none;
  gap: 3px;
  height: 111px;
  margin: 0 1px;
  padding: 2px 2px 1px;
  border: 1px solid #8db2e3;
  border-bottom-color: #7f9fc5;
  border-radius: 4px;
  background: linear-gradient(#dbe5f2 0, #d1deed 16px, #c7d8ed 17px, #c9d9ed 40px, #d5e4f2 80px, #e3f4ff 106px);
  box-shadow: 0 2px 1px #a8c4e8;
}

.group {
  display: flex;
  flex-direction: column;
  flex: none;
  border: 1px solid #a6c1e0;
  border-radius: 3px;
  overflow: hidden;
  box-shadow: 1px 0 0 #e9f2fb;
}

.g-views { width: 74px; }
.g-clip { width: 168px; }
.g-font { width: 335px; }
.g-rich { width: 104px; }
.g-records { width: 256px; }
.g-sort { width: 208px; }
.g-window { width: 181px; }
.g-find { width: 133px; }

.group-body {
  display: flex;
  flex: 1;
}

.group footer {
  position: relative;
  height: 20px;
  line-height: 21px;
  color: #3e6aaa;
  text-align: center;
  white-space: nowrap;
  background: #c2d9f0;
}

.launch {
  position: absolute;
  right: 5px;
  top: 4px;
  color: #6482ae;
}

.faded {
  color: #a3b5cf;
}

.big {
  flex-direction: column;
  justify-content: flex-start;
  padding-top: 7px;
}

.big > span {
  margin-top: 9px;
}

.big span svg {
  margin-bottom: 3px;
}

.big .arrow {
  margin-top: 5px;
}

.big .arrow,
.big span svg {
  color: #4972ac;
}

.off .arrow {
  color: #a0a0a0;
}

.g-views .big { width: 70px; }
.g-clip .big { width: 55px; }
.g-records .big { width: 57px; }
.g-sort .big { width: 56px; }
.g-find .big { width: 54px; }
.g-window .big { width: 98px; }
.g-window .big + .big { width: 76px; }

.smalls {
  display: grid;
  grid-template-rows: repeat(3, 26px);
  align-content: start;
  justify-items: start;
  padding: 1px 0 0 3px;
}

.smalls button {
  justify-content: flex-start;
  gap: 5px;
}

.g-records .smalls {
  width: 70px;
  padding-left: 9px;
}

.off {
  color: #8d8d8d;
}

.live > svg:last-child,
.smalls button > svg:last-child {
  color: #4972ac;
}

.smalls .off:disabled > svg:last-child {
  color: #a0a0a0;
}

.sep {
  width: 1px;
  height: 56px;
  margin-top: 14px;
  background: #9cbbe0;
  box-shadow: 1px 0 0 #edf5fd;
}

.glyph {
  width: 16px;
  color: #5e7193;
  font: 14px/16px "DejaVu Serif", serif;
  text-align: center;
}

.abc {
  display: flex;
  flex-direction: column;
  align-items: center;
  width: 16px;
  color: #222;
  font-size: 7px;
  line-height: 6px;
}

.sorts {
  padding-left: 7px;
}

.sorts button {
  gap: 4px;
}

.g-sort .sorts + .sep {
  margin-left: 4px;
}

.az {
  display: grid;
  color: #3c5a9a;
  font: 10px/9px "Liberation Serif", serif;
}

.az .z {
  color: #a02f3c;
}

.off .az {
  color: #8c9cb8;
}

.g-find .smalls {
  padding-left: 4px;
}

.replace {
  display: grid;
  width: 16px;
  color: #333;
  font: 9px/10px "Liberation Sans", sans-serif;
  text-align: left;
}

.replace em {
  color: #1d9a24;
  font-style: normal;
  font-weight: 700;
  text-align: right;
}

/* biçim düğmeleri */
.tools {
  flex-direction: column;
  gap: 10px;
  padding: 11px 0 0 3px;
}

.tool-row {
  display: flex;
  gap: 3px;
}

.combos {
  display: flex;
}

.combos select {
  height: 27px;
  appearance: none;
  border: 1px solid #b1bcc9;
  border-radius: 0;
  background: linear-gradient(45deg, transparent 50%, #a8a8a8 50%) calc(100% - 9px) 11px / 3px 3px no-repeat, linear-gradient(-45deg, transparent 50%, #a8a8a8 50%) calc(100% - 6px) 11px / 3px 3px no-repeat, #efefef;
  opacity: 1;
}

.font-name {
  width: 174px;
}

.combos .font-size {
  width: 69px;
  border-left: 0;
}

.btn-set {
  display: flex;
  height: 26px;
  border: 1px solid #98b5dd;
  border-radius: 3px;
  background: linear-gradient(#cddcf1, #c0d3ef 50%, #cbdcf3);
}

.btn-set button {
  width: 26px;
}

.btn-set button + button {
  width: 27px;
  border-left: 1px solid #b7cbe9;
}

.btn-set.drop button {
  gap: 7px;
  width: 38px;
  color: #a3a9b3;
}

.dark {
  border-color: #7796c6;
}

.letters button {
  color: #5d7299;
  font: 14px/16px "Liberation Serif", serif;
  font-weight: 700;
}

.g-rich .btn-set button {
  width: 26px;
}

.g-rich .btn-set.drop button {
  width: 38px;
}

.ab {
  display: flex;
  color: #5d6d8a;
  font-size: 10px;
  line-height: 12px;
}

/* güvenlik iletisi */
.message-area {
  display: flex;
  flex: none;
  height: 51px;
  padding: 6px 0 5px 3px;
  background: #c5dbfa;
}

.message-bar {
  display: flex;
  align-items: center;
  flex: 1;
  padding-left: 5px;
  border: 1px solid #9ebadb;
  background: linear-gradient(#fff, #e3f2fd);
  font-family: "Noto Sans", "Open Sans", sans-serif;
}

.message-bar strong {
  min-width: 100px;
  margin: 0 12px 0 14px;
}

.message-bar span {
  min-width: 286px;
}

.message-bar button {
  width: 108px;
  height: 28px;
  margin-left: 12px;
  border: 1px solid #9ab6dc;
  background: #fff;
}

.message-close {
  align-items: flex-start;
  width: 25px;
  padding-top: 7px;
  color: #6c7888;
}

/* çalışma alanı */
.workspace {
  display: flex;
  flex: 1;
  min-height: 0;
  padding-left: 3px;
  background: #8aaedb;
}

.nav-pane {
  flex: none;
  width: 213px;
  padding-right: 7px;
  border: 1px solid #6593cf;
  border-right-color: #fff;
  background: #fff;
  box-shadow: inset -1px 0 0 #6593cf, inset -6px 0 0 #a9cfff, inset -7px 0 0 #6593cf;
}

.nav-head {
  display: flex;
  align-items: center;
  height: 29px;
  padding-left: 6px;
  border-bottom: 1px solid #6593cf;
  background: linear-gradient(#e3efff, #b1d1ff);
}

.nav-head h2 {
  flex: 1;
  font-size: 16px;
  line-height: 24px;
}

.nav-collapse {
  width: 32px;
  height: 24px;
  margin-left: 3px;
  border-left: 1px solid #9ebfe8;
}

.nav-group h3 {
  display: flex;
  align-items: center;
  justify-content: space-between;
  height: 23px;
  padding: 0 14px 0 9px;
  border-top: 1px solid #6593cf;
  border-bottom: 1px solid #add1ff;
  background: linear-gradient(90deg, #d2e4fd, #e2eeff 50%, #dfebfc);
  font-size: 14px;
  font-weight: 700;
}

.nav-group a {
  display: flex;
  align-items: center;
  gap: 14px;
  height: 37px;
  padding-left: 12px;
  color: #000;
  text-decoration: none;
}

.nav-group a svg {
  margin-bottom: 4px;
}

.nav-group a + a {
  gap: 15px;
}

.selected {
  background: #dedede;
}

.desktop {
  position: relative;
  flex: 1;
  margin-right: 1px;
  border: 1px solid #666;
  border-right-color: #e8e8e8;
  border-bottom: 2px solid #f4f4f4;
  background: linear-gradient(#83a4d1 0, #6488ba 48%, #547ab0 68%, #6490cb 100%);
  overflow: hidden;
}

/* alt pencereler */
.window {
  position: absolute;
  display: flex;
  flex-direction: column;
  padding: 0 10px 9px;
  border: 1px solid #a5b0c1;
  border-radius: 6px 6px 0 0;
  background: #ccd7e8;
}

.w-getirilen {
  left: 0;
  top: 41px;
  width: 999px;
  height: 328px;
}

.w-kazanc {
  left: 1px;
  top: 394px;
  width: 1003px;
  height: 310px;
}

.window.active {
  border-color: #3b5a89;
  background: #b0caf0;
}

.win-title {
  display: flex;
  align-items: center;
  flex: none;
  height: 39px;
  margin: 0 -10px;
  padding: 6px 11px 0 13px;
  border-bottom: 2px solid #dde5ef;
  border-radius: 5px 5px 0 0;
  color: #a3b1c8;
  background: linear-gradient(#e3e8ef 0, #dce2ec 9px, #d5dce8 10px, #e2e9f0 100%);
}

.active .win-title {
  border-bottom-color: #add1ff;
  color: #7f9ac6;
  background: linear-gradient(#e4ecf8 0, #d6e4f7 9px, #c9daf5 10px, #e4f1fe 100%);
}

.win-title h2 {
  flex: 1;
  padding-left: 4px;
  color: #9b9b9b;
  font-size: 15px;
  line-height: 20px;
}

.active .win-title h2 {
  color: #767676;
}

.win-title button {
  width: 46px;
  height: 20px;
}

.win-client {
  display: flex;
  flex: 1;
  min-height: 0;
}

.win-form {
  display: flex;
  flex: 1;
  flex-direction: column;
  background: #fff;
}

.form-head {
  display: flex;
  flex: none;
  height: 93px;
  padding: 4px 0 0 48px;
  background: #c2dbff;
}

.form-logo {
  display: flex;
  align-items: center;
  justify-content: center;
  width: 54px;
  height: 42px;
  border: 1px solid #b5b5b5;
  background: linear-gradient(135deg, #fff, #e2e2e2);
}

.form-head h1 {
  margin-left: 32px;
  color: #1f497d;
  font-size: 29px;
  line-height: 49px;
}

.form-detail {
  display: flex;
  flex: 1;
  min-height: 0;
  overflow: hidden;
}

.selector {
  flex: none;
  width: 24px;
  padding: 4px 0 0 11px;
  border-top: 1px solid #000;
  border-right: 1px solid #000;
  background: #d5e4f2;
}

.form-body {
  display: flex;
  flex: 1;
  gap: 19px;
  padding: 30px 4px 0 33px;
}

.form-col {
  display: flex;
  flex: 1;
  flex-direction: column;
  gap: 5px;
}

.w-getirilen .form-col {
  --label: 109px;
}

.w-getirilen .form-col + .form-col {
  --label: 115px;
  flex: 1 0 6px;
}

.w-kazanc .form-col {
  --label: 94px;
}

.field {
  display: grid;
  grid-template-columns: var(--label) 1fr;
  flex: none;
  height: 30px;
  color: #1f497d;
  font-size: 16px;
  line-height: 22px;
}

.field.tall {
  height: 48px;
}

.field.check {
  height: 31px;
}

.field label {
  padding-top: 3px;
}

.field input[type="text"],
.field textarea {
  width: 100%;
  height: 100%;
  padding: 2px 3px 3px;
  border: 1px solid #c0c0c0;
  background: #fff;
  resize: none;
  overflow: hidden;
}

.field input[type="text"] {
  height: 29px;
}

.field input::selection {
  color: #fff;
  background: #000;
}

.field input[type="checkbox"] {
  appearance: none;
  width: 15px;
  height: 15px;
  margin: 0;
  border: 2px solid;
  border-color: #555 #e8e8e8 #e8e8e8 #555;
  background: #fff;
}

.field input[type="checkbox"]:checked {
  background: linear-gradient(135deg, transparent 45%, #000 45%, #000 65%, transparent 65%), #fff;
}

.record-nav {
  display: flex;
  align-items: center;
  flex: none;
  height: 24px;
  border: 1px solid #6593cf;
  border-bottom: 0;
  color: #15428b;
  background: linear-gradient(#e7f1ff 50%, #d5e6ff 50%);
}

.rec-label {
  width: 33px;
  margin-left: 4px;
  color: #333f5c;
}

.record-nav button {
  width: 21px;
}

.record-nav .pale {
  width: 20px;
  color: #a9bcdc;
}

.rec-pos,
.rec-search {
  height: 20px;
  padding: 0 2px;
  border: 1px solid #abbfdf;
  background: #eaf2fd;
}

.rec-pos {
  width: 62px;
  margin-right: 2px;
  font-size: 13px;
}

.record-nav .no-filter {
  gap: 6px;
  width: 117px;
  height: 100%;
  margin: 0 5px 0 4px;
  border: solid #6593cf;
  border-width: 0 1px;
  color: #9ba0a6;
}

.rec-search {
  width: 87px;
}

.scroll {
  display: flex;
  flex-direction: column;
  align-items: center;
  flex: none;
  width: 21px;
  padding: 8px 0 31px;
  background: linear-gradient(90deg, #f8f8f8, #eaeaea 50%, #f4f4f4);
}

.thumb {
  display: flex;
  align-items: center;
  justify-content: center;
  width: 19px;
  height: 168px;
  margin-top: 7px;
  border: 1px solid #5b6f9b;
  border-radius: 2px;
  background: linear-gradient(90deg, #eef2f6, #dfe6ed 45%, #b9c8da 55%, #c3d0df);
}

.w-kazanc .thumb {
  height: 150px;
}

.thumb i {
  width: 8px;
  height: 7px;
  background: repeating-linear-gradient(#7d8490 0 1px, #dfe6ed 1px 2px);
}

.scroll-down {
  margin-top: auto;
}

/* durum çubuğu */
.status {
  display: flex;
  align-items: center;
  flex: none;
  height: 28px;
  padding-top: 2px;
  border-top: 1px solid #567db0;
  color: #15428b;
  background: linear-gradient(#fff 0, #d9e8fa 2px, #c9ddf7 9px, #b0cef4 10px, #d5e5fa 100%);
}

.status-left {
  width: 50%;
  padding-left: 8px;
  border-right: 1px solid #a4c0e5;
}

.status-right {
  flex: 1;
  padding-right: 9px;
  border-right: 2px solid #6c93c7;
  text-align: right;
}

.views {
  display: flex;
  margin: 0 2px 0 6px;
  border: 1px solid #7f9dc8;
}

.views button {
  width: 22px;
  height: 22px;
  border-right: 1px solid #a4c0e5;
}

.views .on {
  background: linear-gradient(#fddc9c, #fbb84c 50%, #ffe391);
}

/* görev çubuğu */
.taskbar {
  display: flex;
  flex: none;
  height: 50px;
  color: #fff;
  background: linear-gradient(90deg, #141a02, #181f09 50%, #131b05);
}

.sys {
  width: 60px;
}

.task {
  width: 62px;
  border-bottom: 3px solid transparent;
}

.sys + .task {
  margin-left: 2px;
}

.task.open {
  background: linear-gradient(#cdf8b0, #cdf8b0) center bottom / 51px 3px no-repeat border-box;
}

.task.current {
  border-bottom-color: #cdf8b0;
  background: #454a38;
}

.adobe {
  width: 28px;
  height: 27px;
  border: 2px solid;
  font-size: 15px;
  font-weight: 600;
  line-height: 22px;
}

.ps {
  color: #7dbdf5;
  background: #0a1440;
}

.fl {
  color: #d7191f;
  background: #270103;
}

.tray {
  display: flex;
  align-items: center;
  gap: 12px;
  margin-left: auto;
  margin-right: 5px;
  padding-right: 12px;
  border-right: 1px solid #6b705c;
  font-size: 14px;
  line-height: 22px;
  text-align: center;
}

.lang {
  margin-left: 2px;
}

.tray time {
  margin-left: 9px;
}
</style>
